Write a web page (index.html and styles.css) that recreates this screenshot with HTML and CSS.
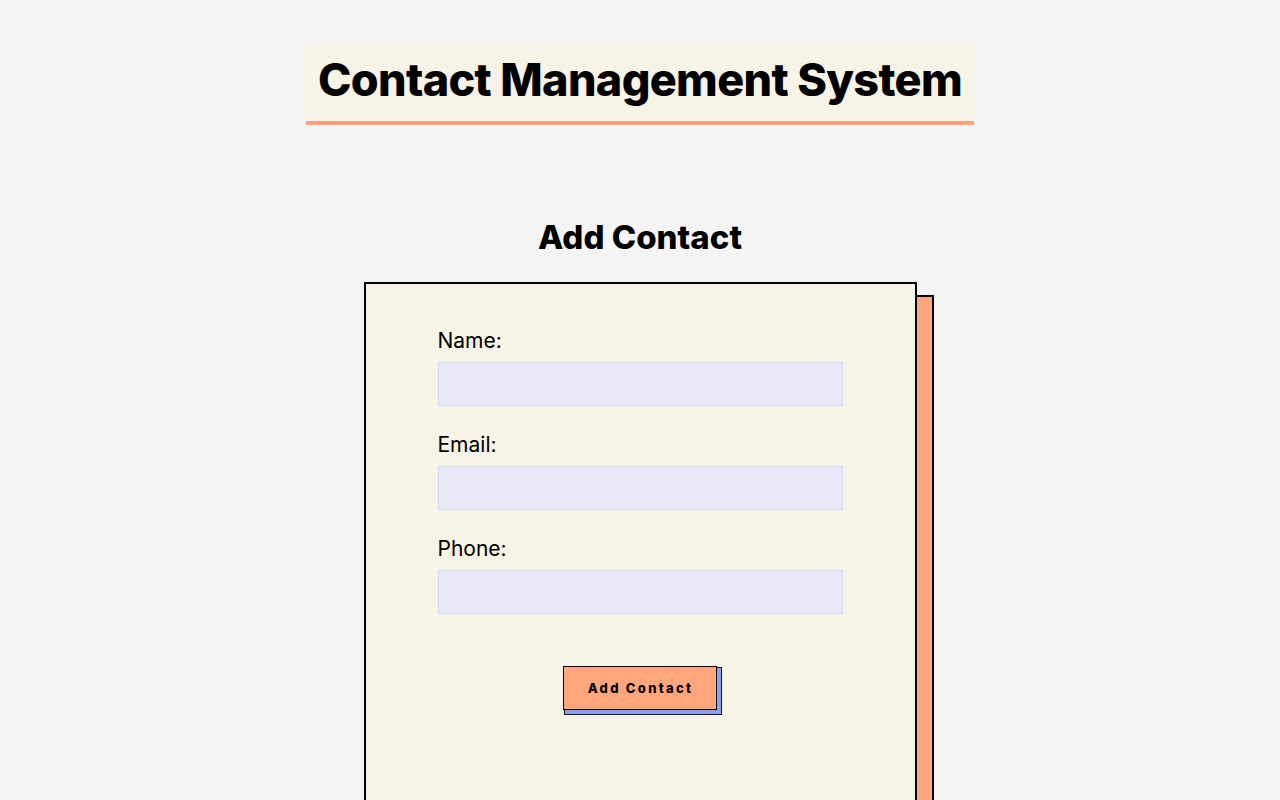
FILE: index.html
```html
<!DOCTYPE html>
<html lang="en">
<head>
<meta charset="utf-8">
<title>Contact Management System</title>
<link rel="stylesheet" href="styles.css">
</head>
<body>
  <header class="site-header">
    <h1 class="site-title">Contact Management System</h1>
  </header>
  <main class="main">
    <h2 class="section-title">Add Contact</h2>
    <div class="card-wrap">
      <form class="card">
        <div class="field">
          <label class="field-label" for="name">Name:</label>
          <input class="field-input" id="name" type="text">
        </div>
        <div class="field">
          <label class="field-label" for="email">Email:</label>
          <input class="field-input" id="email" type="email">
        </div>
        <div class="field">
          <label class="field-label" for="phone">Phone:</label>
          <input class="field-input" id="phone" type="tel">
        </div>
        <div class="actions">
          <span class="btn-wrap">
            <button class="btn" type="button">Add Contact</button>
          </span>
        </div>
      </form>
    </div>
  </main>
</body>
</html>
```
FILE: styles.css
```css
*, *::before, *::after { box-sizing: border-box; }

html, body {
  margin: 0;
  padding: 0;
}

body {
  background: #f4f4f4;
  font-family: Inter, "Noto Sans", sans-serif;
  color: #000;
  overflow: hidden;
  height: 800px;
}

.site-header {
  display: flex;
  justify-content: center;
  padding-top: 42px;
}

.site-title {
  margin: 0;
  background: #f7f3e6;
  border-bottom: 4px solid #ffa07a;
  font-size: 45px;
  font-weight: 800;
  line-height: 76px;
  height: 83px;
  padding: 0 12px;
  letter-spacing: -0.66px;
}

.main {
  display: flex;
  flex-direction: column;
  align-items: center;
}

.section-title {
  margin: 92px 0 0;
  font-size: 33px;
  font-weight: 800;
  line-height: 40px;
  height: 40px;
}

.card-wrap {
  position: relative;
  margin-top: 25px;
  width: 553px;
}

.card-wrap::before {
  content: "";
  position: absolute;
  left: 17px;
  top: 13px;
  width: 553px;
  height: 600px;
  background: #ffa67d;
  border: 2px solid #000;
  z-index: 0;
}

.card {
  position: relative;
  z-index: 1;
  background: #f7f3e6;
  border: 2px solid #000;
  padding: 43px 72px 120px;
  height: 600px;
  display: flex;
  flex-direction: column;
}

.field {
  display: flex;
  flex-direction: column;
  margin-bottom: 25px;
}

.field-label {
  font-size: 21px;
  line-height: 28px;
  margin-bottom: 7px;
}

.field-input {
  height: 44px;
  width: 100%;
  background: #e9e8f6;
  border: 1px solid #d8d9f3;
  outline: none;
  font: inherit;
}

.actions {
  display: flex;
  justify-content: center;
  margin-top: 27px;
}

.btn-wrap {
  position: relative;
  display: block;
  width: 154px;
  height: 44px;
}

.btn-wrap::before {
  content: "";
  position: absolute;
  left: 1px;
  top: 1px;
  width: 158px;
  height: 48px;
  background: #8f9df2;
  border: 1px solid #1a1a1a;
}

.btn {
  position: relative;
  display: block;
  width: 154px;
  height: 44px;
  background: #ffa67d;
  border: 1.5px solid #000;
  font-family: Inter, sans-serif;
  font-weight: 800;
  font-size: 13px;
  letter-spacing: 2.3px;
  color: #000;
  padding: 0 0 0 1px;
  cursor: pointer;
}
```
